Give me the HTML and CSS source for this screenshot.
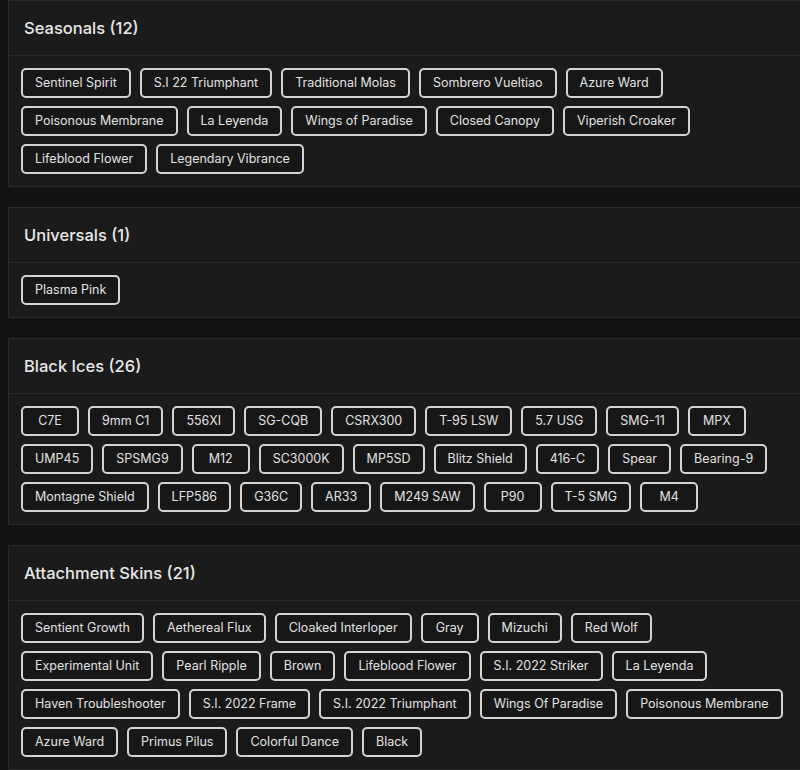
FILE: index.html
```html
<!DOCTYPE html>
<html lang="en">
<head>
    <meta charset="UTF-8">
    <meta name="viewport" content="width=device-width, initial-scale=1.0">
    <title>Skins</title>
    <link rel="stylesheet" href="styles.css">
</head>
<body>

<div class="page">
    <section class="card">
        <div class="card-header"><h2>Seasonals (12)</h2></div>
        <div class="card-body">
            <span class="tag">Sentinel Spirit</span>
            <span class="tag">S.I 22 Triumphant</span>
            <span class="tag">Traditional Molas</span>
            <span class="tag">Sombrero Vueltiao</span>
            <span class="tag">Azure Ward</span>
            <span class="tag">Poisonous Membrane</span>
            <span class="tag">La Leyenda</span>
            <span class="tag">Wings of Paradise</span>
            <span class="tag">Closed Canopy</span>
            <span class="tag">Viperish Croaker</span>
            <span class="tag">Lifeblood Flower</span>
            <span class="tag">Legendary Vibrance</span>
        </div>
    </section>

    <section class="card">
        <div class="card-header"><h2>Universals (1)</h2></div>
        <div class="card-body">
            <span class="tag">Plasma Pink</span>
        </div>
    </section>

    <section class="card">
        <div class="card-header"><h2>Black Ices (26)</h2></div>
        <div class="card-body">
            <span class="tag">C7E</span>
            <span class="tag">9mm C1</span>
            <span class="tag">556XI</span>
            <span class="tag">SG-CQB</span>
            <span class="tag">CSRX300</span>
            <span class="tag">T-95 LSW</span>
            <span class="tag">5.7 USG</span>
            <span class="tag">SMG-11</span>
            <span class="tag">MPX</span>
            <span class="tag">UMP45</span>
            <span class="tag">SPSMG9</span>
            <span class="tag">M12</span>
            <span class="tag">SC3000K</span>
            <span class="tag">MP5SD</span>
            <span class="tag">Blitz Shield</span>
            <span class="tag">416-C</span>
            <span class="tag">Spear</span>
            <span class="tag">Bearing-9</span>
            <span class="tag">Montagne Shield</span>
            <span class="tag">LFP586</span>
            <span class="tag">G36C</span>
            <span class="tag">AR33</span>
            <span class="tag">M249 SAW</span>
            <span class="tag">P90</span>
            <span class="tag">T-5 SMG</span>
            <span class="tag">M4</span>
        </div>
    </section>

    <section class="card">
        <div class="card-header"><h2>Attachment Skins (21)</h2></div>
        <div class="card-body">
            <span class="tag">Sentient Growth</span>
            <span class="tag">Aethereal Flux</span>
            <span class="tag">Cloaked Interloper</span>
            <span class="tag">Gray</span>
            <span class="tag">Mizuchi</span>
            <span class="tag">Red Wolf</span>
            <span class="tag">Experimental Unit</span>
            <span class="tag">Pearl Ripple</span>
            <span class="tag">Brown</span>
            <span class="tag">Lifeblood Flower</span>
            <span class="tag">S.I. 2022 Striker</span>
            <span class="tag">La Leyenda</span>
            <span class="tag">Haven Troubleshooter</span>
            <span class="tag">S.I. 2022 Frame</span>
            <span class="tag">S.I. 2022 Triumphant</span>
            <span class="tag">Wings Of Paradise</span>
            <span class="tag">Poisonous Membrane</span>
            <span class="tag">Azure Ward</span>
            <span class="tag">Primus Pilus</span>
            <span class="tag">Colorful Dance</span>
            <span class="tag">Black</span>
        </div>
    </section>
</div>

</body>
</html>
```
FILE: styles.css
```css
html, body {
    background-color: #121212;
    overflow: hidden;
}
body {
    font-family: Inter, "Open Sans", sans-serif;
    color: #e6e6e6;
    margin: 0;
    padding: 0;
}
.page {
    padding-left: 8px;
    width: 794px;
}
.card {
    background: #1b1b1b;
    border: 1px solid #2a2a2a;
    margin-bottom: 20px;
}
.card-header {
    height: 54px;
    display: flex;
    align-items: center;
    padding: 0 15px;
    border-bottom: 1px solid #2a2a2a;
}
.card-header h2 {
    margin: 0;
    font-size: 16.5px;
    font-weight: 500;
    color: #e8e8e8;
}
.card-body {
    display: flex;
    flex-wrap: wrap;
    gap: 8px 9px;
    padding: 12px;
}
.tag {
    box-sizing: border-box;
    min-width: 58px;
    text-align: center;
    padding: 5px 12px;
    font-size: 12.5px;
    line-height: 16px;
    color: #e2e2e2;
    background: #171717;
    border: 2px solid #d4d4d4;
    border-radius: 5px;
}
```
